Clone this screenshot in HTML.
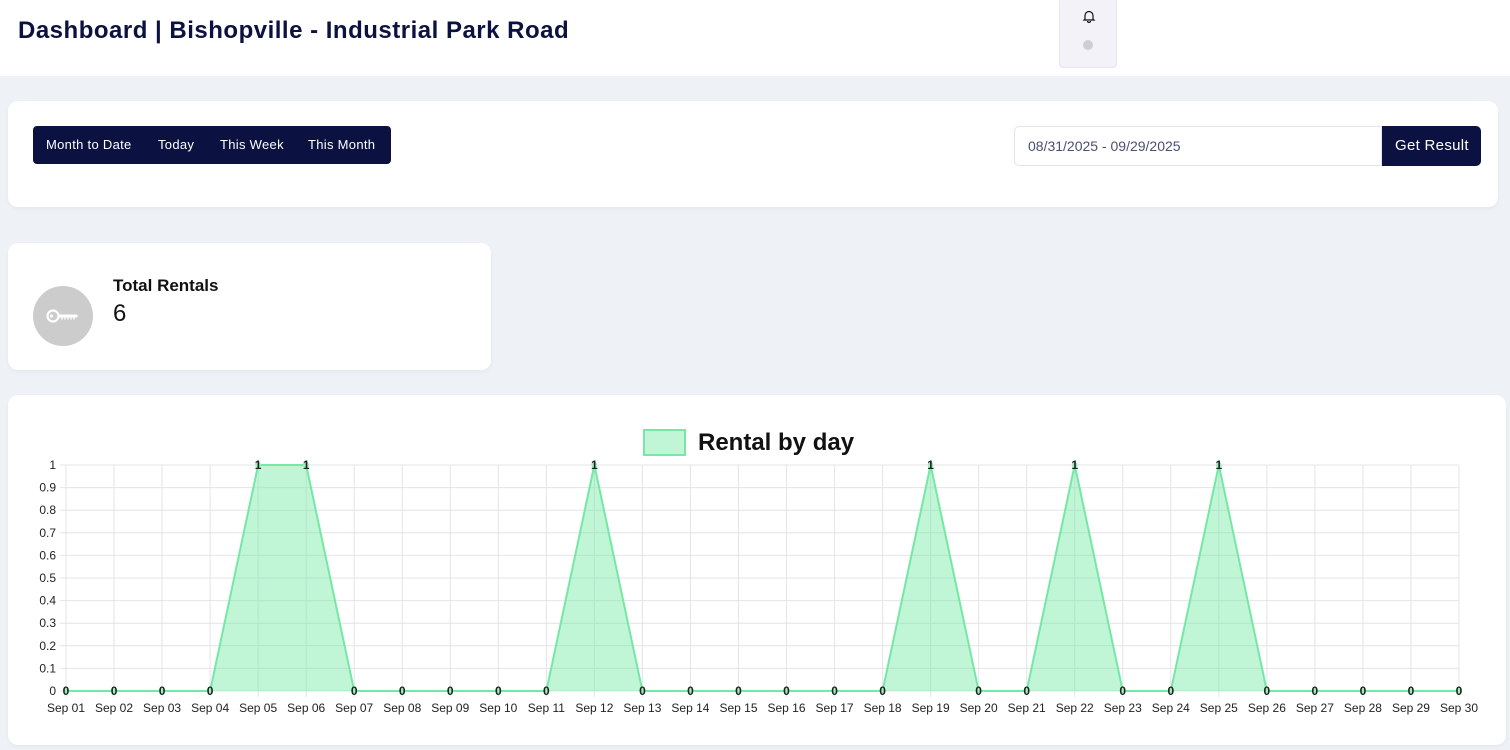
<!DOCTYPE html>
<html><head><meta charset="utf-8"><style>
*{box-sizing:border-box;margin:0;padding:0}
body{width:1510px;height:750px;background:#eef1f6;font-family:"Liberation Sans",sans-serif;position:relative;overflow:hidden}
.hdr{position:absolute;left:0;top:0;width:1510px;height:76px;background:#fff}
.hdr h1{position:absolute;left:18px;top:17px;font-size:24px;font-weight:bold;color:#0b1140;letter-spacing:0.5px}
.bell{position:absolute;left:1059px;top:-2px;width:58px;height:70px;background:#f4f2f9;border:1px solid #e6e6ef;border-radius:4px}
.dot{position:absolute;left:23px;top:41px;width:10px;height:10px;border-radius:50%;background:#cfcfd3}
.card{position:absolute;background:#fff;border-radius:10px;box-shadow:0 2px 4px rgba(0,0,0,.04)}
.grp{position:absolute;left:25px;top:25px;width:358px;height:38px;background:#0b1140;border-radius:4px;color:#fff;font-size:13px}
.grp span{position:absolute;top:11px;letter-spacing:.3px}
.inp{position:absolute;left:1006px;top:25px;width:368px;height:40px;border:1px solid #e3e5ec;border-radius:5px 0 0 5px;font-size:14px;color:#4a5070;padding:11px 0 0 13px}
.btn{position:absolute;left:1374px;top:25px;width:99px;height:40px;background:#0b1140;border-radius:0 5px 5px 0;color:#fff;font-size:15px;padding:11px 0 0 13px;letter-spacing:.3px}
</style></head><body>
<div class="hdr"><h1>Dashboard | Bishopville - Industrial Park Road</h1>
<div class="bell"><svg style="position:absolute;left:22px;top:10px" width="14" height="14" viewBox="0 0 14 14"><path d="M3 10V6.5a4 4 0 0 1 8 0V10l1 1H2z M5.5 12a1.5 1.5 0 0 0 3 0" fill="none" stroke="#111" stroke-width="1.2"/></svg><div class="dot"></div></div></div>
<div class="card" style="left:8px;top:101px;width:1490px;height:106px">
<div class="grp"><span style="left:13px">Month to Date</span><span style="left:125px">Today</span><span style="left:187px">This Week</span><span style="left:275px">This Month</span></div>
<div class="inp">08/31/2025 - 09/29/2025</div><div class="btn">Get Result</div></div>
<div class="card" style="left:8px;top:243px;width:483px;height:127px">
<div style="position:absolute;left:25px;top:43px;width:60px;height:60px;border-radius:50%;background:#cccccc">
<svg style="position:absolute;left:12px;top:18px" width="36" height="24" viewBox="0 0 36 24"><circle cx="8" cy="12" r="5.5" fill="none" stroke="#fff" stroke-width="2.2"/><circle cx="6.5" cy="12" r="1.6" fill="#fff"/><rect x="13" y="10.5" width="19" height="3" fill="#fff"/><path d="M17 13.5v2M20 13.5v2M23 13.5v2M26 13.5v2M29 13.5v2" stroke="#fff" stroke-width="1.4"/><path d="M31 10.5l2.5 1.5-2.5 1.5z" fill="#fff"/></svg></div>
<div style="position:absolute;left:105px;top:33px;font-size:17px;font-weight:bold;color:#111">Total Rentals</div>
<div style="position:absolute;left:105px;top:57px;font-size:24px;color:#111">6</div></div>
<div class="card" style="left:8px;top:395px;width:1498px;height:350px"></div>
<svg id="ch" style="position:absolute;left:0;top:0" width="1510" height="750"></svg>
<script>
var s='',X=function(d){return 66+(d-1)*48.0345},Y=function(v){return 691-226*v};
s+='<rect x="644" y="430" width="41" height="25" fill="#c0f5d6" stroke="#74e8a4" stroke-width="2"/><text x="698" y="450" font-size="24" font-weight="bold" fill="#111" font-family="Liberation Sans">Rental by day</text>';
for(var k=0;k<=10;k++){var y=Y(k/10);s+='<line x1="60" x2="1459" y1="'+y+'" y2="'+y+'" stroke="#e4e4e8"/><text x="56" y="'+(y+4)+'" text-anchor="end" font-size="12" fill="#222" font-family="Liberation Sans">'+(k==0?'0':k==10?'1':(k/10).toFixed(1))+'</text>';}
for(var d=1;d<=30;d++){var x=X(d);s+='<line x1="'+x+'" x2="'+x+'" y1="465" y2="697" stroke="#e4e4e8"/><text x="'+x+'" y="712" text-anchor="middle" font-size="12" fill="#222" font-family="Liberation Sans">Sep '+(d<10?'0'+d:d)+'</text>';}
var data=[];for(d=1;d<=30;d++)data.push([5,6,12,19,22,25].indexOf(d)>=0?1:0);
var p='M'+X(1)+' '+Y(0);for(d=1;d<=30;d++)p+=' L'+X(d)+' '+Y(data[d-1]);p+=' L'+X(30)+' '+Y(0)+'Z';
s+='<path d="'+p+'" fill="rgba(116,232,164,0.45)"/>';
var l='';for(d=1;d<=30;d++)l+=(d==1?'M':' L')+X(d)+' '+Y(data[d-1]);
s+='<path d="'+l+'" fill="none" stroke="#74e8a4" stroke-width="2"/>';
for(d=1;d<=30;d++){s+='<circle cx="'+X(d)+'" cy="'+Y(data[d-1])+'" r="3" fill="#9bf0bf"/><text x="'+X(d)+'" y="'+(Y(data[d-1])+4)+'" text-anchor="middle" font-size="12" font-weight="bold" fill="#222" font-family="Liberation Sans">'+data[d-1]+'</text>';}
document.getElementById('ch').innerHTML=s;
</script>
</body></html>
